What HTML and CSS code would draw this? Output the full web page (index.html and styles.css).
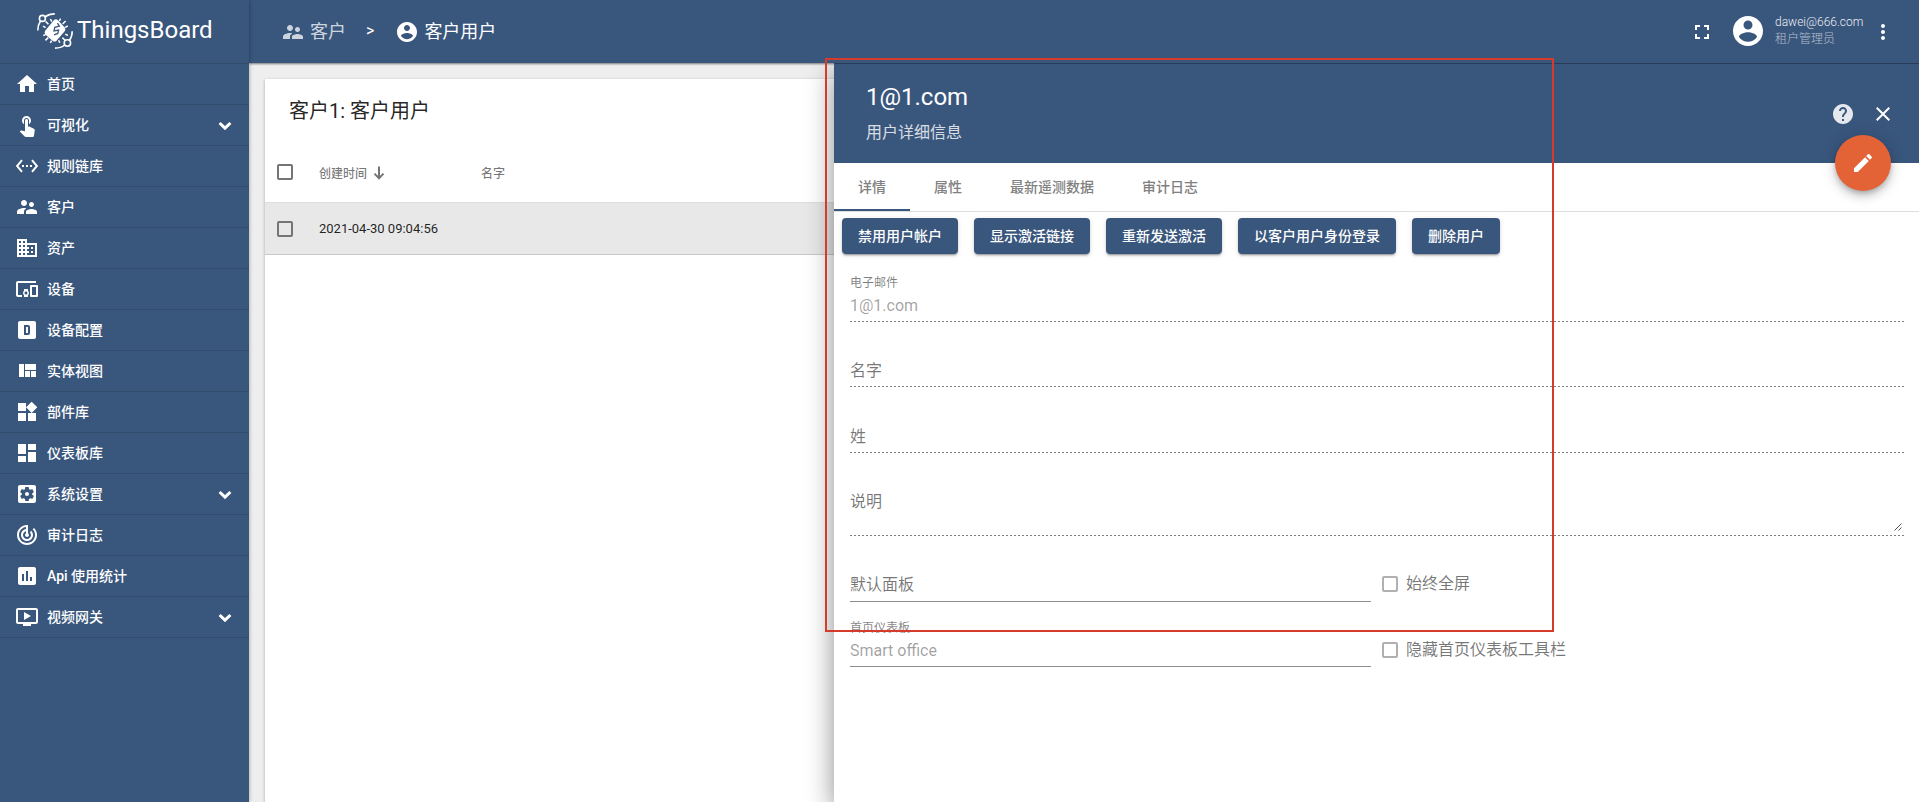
FILE: index.html
```html
<!DOCTYPE html>
<html lang="zh-CN">
<head>
  <meta charset="UTF-8">
  <title>ThingsBoard | 客户用户</title>
  <meta name="viewport" content="width=device-width, initial-scale=1.0">
  <link rel="stylesheet" href="styles.css">
</head>
<body>
  <div class="app">

    <!-- Side navigation -->
    <nav class="sidebar">
      <div class="logo">
        <svg class="logo-mark" viewBox="0 0 36 36">
          <g fill="none" stroke="#fff" stroke-width="1.6">
            <circle cx="5.4" cy="5.4" r="3"/>
            <path d="M8 4Q12 .9 17.8 .9M3.6 7.8Q.8 12 .8 17.6"/>
            <circle cx="30.4" cy="30" r="3.2"/>
            <path d="M32.4 27.4Q35.2 23.6 35.2 18.2M27.8 32Q24 35.1 18 35.1"/>
            <path stroke-width="1.5" d="M11.4 11.2L8.6 8.4M14.8 8.6L13.4 6M22.4 8L23.6 5.6M25.6 11L28.6 8M28 14.4L30.8 13M28.2 21.2L31 22.4M25.4 24.6L28 27.2M21.6 27.2L22.8 29.8M14.6 27.6L13.4 30M11.2 24.6L8.4 27.4M8.8 21.4L6.2 22.6M8.6 14.6L6 13.2"/>
          </g>
          <path fill="#fff" d="M17.2 6.8q1.9-1 3.6.3l6.9 7.4q1.2 1.8.2 3.6l-8.6 9.8q-1.6 1.2-3.4 0l-7.7-6.5q-1.2-1.8 0-3.6z"/>
          <path fill="none" stroke="#39567d" stroke-width="1.3" d="M20.4 10.2l2 3-4.6 1.2-.8 3.6 4.6-1-.8 3.4-3.8 1.4"/>
        </svg>
        <span class="logo-text">ThingsBoard</span>
      </div>
      <ul class="menu">
        <li class="menu-item">
          <svg class="icon" viewBox="0 0 24 24"><path d="M10 20v-6h4v6h5v-8h3L12 3 2 12h3v8z"/></svg>
          <span>首页</span>
        </li>
        <li class="menu-item">
          <svg class="icon" viewBox="0 0 24 24"><path d="M9 11.24V7.5C9 6.12 10.12 5 11.5 5S14 6.12 14 7.5v3.74c1.21-.81 2-2.18 2-3.74C16 5.01 13.99 3 11.5 3S7 5.01 7 7.5c0 1.56.79 2.93 2 3.74zm9.84 4.63l-4.54-2.26c-.17-.07-.35-.11-.54-.11H13v-6c0-.83-.67-1.5-1.5-1.5S10 6.67 10 7.5v10.74l-3.43-.72c-.08-.01-.15-.03-.24-.03-.31 0-.59.13-.79.33l-.79.8 4.94 4.94c.27.27.65.44 1.06.44h6.79c.75 0 1.33-.55 1.44-1.28l.75-5.27c.01-.07.02-.14.02-.2 0-.62-.38-1.16-.91-1.38z"/></svg>
          <span>可视化</span>
          <svg class="chevron" viewBox="0 0 14 10"><path d="M1.6 2L7 7.2 12.4 2"/></svg>
        </li>
        <li class="menu-item">
          <svg class="icon" viewBox="0 0 24 24"><path d="M7.77 6.76L6.23 5.48.82 12l5.41 6.52 1.54-1.28L3.42 12l4.35-5.24zM7 13h2v-2H7v2zm10-2h-2v2h2v-2zm-6 2h2v-2h-2v2zm6.77-7.52l-1.54 1.28L20.58 12l-4.35 5.24 1.54 1.28L23.18 12l-5.41-6.52z"/></svg>
          <span>规则链库</span>
        </li>
        <li class="menu-item">
          <svg class="icon" viewBox="0 0 24 24"><path d="M16.5 12c1.38 0 2.49-1.12 2.49-2.5S17.88 7 16.5 7C15.12 7 14 8.12 14 9.5s1.12 2.5 2.5 2.5zM9 11c1.66 0 2.99-1.34 2.99-3S10.66 5 9 5C7.34 5 6 6.34 6 8s1.34 3 3 3zm7.5 3c-1.83 0-5.5.92-5.5 2.75V19h11v-2.25c0-1.83-3.67-2.75-5.5-2.75zM9 13c-2.33 0-7 1.17-7 3.5V19h7v-2.25c0-.85.33-2.34 2.37-3.47C10.5 13.1 9.66 13 9 13z"/></svg>
          <span>客户</span>
        </li>
        <li class="menu-item">
          <svg class="icon" viewBox="0 0 24 24"><path d="M12 7V3H2v18h20V7H12zM6 19H4v-2h2v2zm0-4H4v-2h2v2zm0-4H4V9h2v2zm0-4H4V5h2v2zm4 12H8v-2h2v2zm0-4H8v-2h2v2zm0-4H8V9h2v2zm0-4H8V5h2v2zm10 12h-8v-2h2v-2h-2v-2h2v-2h-2V9h8v10zm-2-8h-2v2h2v-2zm0 4h-2v2h2v-2z"/></svg>
          <span>资产</span>
        </li>
        <li class="menu-item">
          <svg class="icon" viewBox="0 0 24 24"><path d="M3 6h18V4H3c-1.1 0-2 .9-2 2v12c0 1.1.9 2 2 2h4v-2H3V6zm10 6H9v1.78c-.61.55-1 1.33-1 2.22s.39 1.67 1 2.22V20h4v-1.78c.61-.55 1-1.34 1-2.22s-.39-1.67-1-2.22V12zm-2 5.5c-.83 0-1.5-.67-1.5-1.5s.67-1.5 1.5-1.5 1.5.67 1.5 1.5-.67 1.5-1.5 1.5zM22 8h-6c-.5 0-1 .5-1 1v10c0 .5.5 1 1 1h6c.5 0 1-.5 1-1V9c0-.5-.5-1-1-1zm-1 10h-4v-8h4v8z"/></svg>
          <span>设备</span>
        </li>
        <li class="menu-item">
          <svg class="icon" viewBox="0 0 24 24"><path fill-rule="evenodd" d="M9 7v10h4a2 2 0 0 0 2-2V9a2 2 0 0 0-2-2H9zm2 2h2v6h-2V9zM5 3h14a2 2 0 0 1 2 2v14a2 2 0 0 1-2 2H5a2 2 0 0 1-2-2V5a2 2 0 0 1 2-2z"/></svg>
          <span>设备配置</span>
        </li>
        <li class="menu-item">
          <svg class="icon" viewBox="0 0 24 24"><path d="M10 18h5v-6h-5v6zm-6 0h5V5H4v13zm12 0h5v-6h-5v6zM10 5v6h11V5H10z"/></svg>
          <span>实体视图</span>
        </li>
        <li class="menu-item">
          <svg class="icon" viewBox="0 0 24 24"><path d="M13 13v8h8v-8h-8zM3 21h8v-8H3v8zM3 3v8h8V3H3zm13.66-1.31L11 7.34 16.66 13l5.66-5.66-5.66-5.65z"/></svg>
          <span>部件库</span>
        </li>
        <li class="menu-item">
          <svg class="icon" viewBox="0 0 24 24"><path d="M3 13h8V3H3v10zm0 8h8v-6H3v6zm10 0h8V11h-8v10zm0-18v6h8V3h-8z"/></svg>
          <span>仪表板库</span>
        </li>
        <li class="menu-item">
          <svg class="icon" viewBox="0 0 24 24"><path d="M12 10c-1.1 0-2 .9-2 2s.9 2 2 2 2-.9 2-2-.9-2-2-2zm7-7H5c-1.11 0-2 .9-2 2v14c0 1.1.89 2 2 2h14c1.11 0 2-.9 2-2V5c0-1.1-.89-2-2-2zm-1.75 9c0 .23-.02.46-.05.68l1.48 1.16c.13.11.17.3.08.45l-1.4 2.42c-.09.15-.27.21-.43.15l-1.74-.7c-.36.28-.76.51-1.18.69l-.26 1.85c-.03.17-.18.3-.35.3h-2.8c-.17 0-.32-.13-.35-.29l-.26-1.85c-.43-.18-.82-.41-1.18-.69l-1.74.7c-.16.06-.34 0-.43-.15l-1.4-2.42c-.09-.15-.05-.34.08-.45l1.48-1.16c-.03-.23-.05-.46-.05-.69 0-.23.02-.46.05-.68l-1.48-1.16c-.13-.11-.17-.3-.08-.45l1.4-2.42c.09-.15.27-.21.43-.15l1.74.7c.36-.28.76-.51 1.18-.69l.26-1.85c.03-.17.18-.3.35-.3h2.8c.17 0 .32.13.35.29l.26 1.85c.43.18.82.41 1.18.69l1.74-.7c.16-.06.34 0 .43.15l1.4 2.42c.09.15.05.34-.08.45l-1.48 1.16c.03.23.05.46.05.69z"/></svg>
          <span>系统设置</span>
          <svg class="chevron" viewBox="0 0 14 10"><path d="M1.6 2L7 7.2 12.4 2"/></svg>
        </li>
        <li class="menu-item">
          <svg class="icon" viewBox="0 0 24 24"><path d="M19.07 4.93l-1.41 1.41C19.1 7.79 20 9.79 20 12c0 4.42-3.58 8-8 8s-8-3.58-8-8c0-4.08 3.05-7.44 7-7.93v2.02C8.16 6.57 6 9.03 6 12c0 3.31 2.69 6 6 6s6-2.69 6-6c0-1.66-.67-3.16-1.76-4.24l-1.41 1.41C15.55 9.9 16 10.9 16 12c0 2.21-1.79 4-4 4s-4-1.79-4-4c0-1.86 1.28-3.41 3-3.86v2.14c-.6.35-1 .98-1 1.72 0 1.1.9 2 2 2s2-.9 2-2c0-.74-.4-1.38-1-1.72V2h-1C6.48 2 2 6.48 2 12s4.48 10 10 10 10-4.48 10-10c0-2.76-1.12-5.26-2.93-7.07z"/></svg>
          <span>审计日志</span>
        </li>
        <li class="menu-item">
          <svg class="icon" viewBox="0 0 24 24"><path d="M19 3H5c-1.1 0-2 .9-2 2v14c0 1.1.9 2 2 2h14c1.1 0 2-.9 2-2V5c0-1.1-.9-2-2-2zM9 17H7v-7h2v7zm4 0h-2V7h2v10zm4 0h-2v-4h2v4z"/></svg>
          <span>Api 使用统计</span>
        </li>
        <li class="menu-item">
          <svg class="icon" viewBox="0 0 24 24"><path d="M21 3H3c-1.11 0-2 .89-2 2v12c0 1.1.89 2 2 2h5v2h8v-2h5c1.1 0 1.99-.9 1.99-2L23 5c0-1.11-.9-2-2-2zm0 14H3V5h18v12zm-5-6l-7 4V7z"/></svg>
          <span>视频网关</span>
          <svg class="chevron" viewBox="0 0 14 10"><path d="M1.6 2L7 7.2 12.4 2"/></svg>
        </li>
      </ul>
    </nav>

    <div class="main">
      <!-- Top toolbar -->
      <header class="toolbar">
        <div class="breadcrumb">
          <a class="crumb crumb-parent">
            <svg class="icon" viewBox="0 0 24 24"><path d="M16.5 12c1.38 0 2.49-1.12 2.49-2.5S17.88 7 16.5 7C15.12 7 14 8.12 14 9.5s1.12 2.5 2.5 2.5zM9 11c1.66 0 2.99-1.34 2.99-3S10.66 5 9 5C7.34 5 6 6.34 6 8s1.34 3 3 3zm7.5 3c-1.83 0-5.5.92-5.5 2.75V19h11v-2.25c0-1.83-3.67-2.75-5.5-2.75zM9 13c-2.33 0-7 1.17-7 3.5V19h7v-2.25c0-.85.33-2.34 2.37-3.47C10.5 13.1 9.66 13 9 13z"/></svg>
            <span>客户</span>
          </a>
          <span class="crumb-sep">&gt;</span>
          <span class="crumb">
            <svg class="icon" viewBox="0 0 24 24"><path d="M12 2C6.48 2 2 6.48 2 12s4.48 10 10 10 10-4.48 10-10S17.52 2 12 2zm0 3c1.66 0 3 1.34 3 3s-1.34 3-3 3-3-1.34-3-3 1.34-3 3-3zm0 14.2c-2.5 0-4.71-1.28-6-3.22.03-1.99 4-3.08 6-3.08 1.99 0 5.97 1.09 6 3.08-1.29 1.94-3.5 3.22-6 3.22z"/></svg>
            <span>客户用户</span>
          </span>
        </div>
        <div class="toolbar-right">
          <svg class="icon" viewBox="0 0 24 24"><path d="M7 14H5v5h5v-2H7v-3zm-2-4h2V7h3V5H5v5zm12 7h-3v2h5v-5h-2v3zM14 5v2h3v3h2V5h-5z"/></svg>
          <svg class="icon avatar" viewBox="0 0 24 24"><path d="M12 2C6.48 2 2 6.48 2 12s4.48 10 10 10 10-4.48 10-10S17.52 2 12 2zm0 3c1.66 0 3 1.34 3 3s-1.34 3-3 3-3-1.34-3-3 1.34-3 3-3zm0 14.2c-2.5 0-4.71-1.28-6-3.22.03-1.99 4-3.08 6-3.08 1.99 0 5.97 1.09 6 3.08-1.29 1.94-3.5 3.22-6 3.22z"/></svg>
          <div class="user-info">
            <div class="user-name">dawei@666.com</div>
            <div class="user-role">租户管理员</div>
          </div>
          <svg class="icon" viewBox="0 0 24 24"><path d="M12 8c1.1 0 2-.9 2-2s-.9-2-2-2-2 .9-2 2 .9 2 2 2zm0 2c-1.1 0-2 .9-2 2s.9 2 2 2 2-.9 2-2-.9-2-2-2zm0 6c-1.1 0-2 .9-2 2s.9 2 2 2 2-.9 2-2-.9-2-2-2z"/></svg>
        </div>
      </header>

      <!-- User list -->
      <div class="content">
        <div class="card">
          <h2 class="card-title">客户1: 客户用户</h2>
          <div class="row row-head">
            <span class="checkbox"></span>
            <span class="col-time">创建时间
              <svg class="sort-arrow" viewBox="0 0 12 14"><path d="M6 .5v11.5M1.5 7.6L6 12.2l4.5-4.6"/></svg>
            </span>
            <span>名字</span>
          </div>
          <div class="row row-selected">
            <span class="checkbox"></span>
            <span class="col-time">2021-04-30 09:04:56</span>
          </div>
        </div>
      </div>
    </div>

    <!-- User details drawer -->
    <section class="details">
      <div class="details-header">
        <div class="details-titles">
          <div class="details-title">1@1.com</div>
          <div class="details-subtitle">用户详细信息</div>
        </div>
        <div class="details-actions">
          <svg class="icon help" viewBox="0 0 24 24"><path d="M12 2C6.48 2 2 6.48 2 12s4.48 10 10 10 10-4.48 10-10S17.52 2 12 2zm1 17h-2v-2h2v2zm2.07-7.75l-.9.92C13.45 12.9 13 13.5 13 15h-2v-.5c0-1.1.45-2.1 1.17-2.83l1.24-1.26c.37-.36.59-.86.59-1.41 0-1.1-.9-2-2-2s-2 .9-2 2H8c0-2.21 1.79-4 4-4s4 1.79 4 4c0 .88-.36 1.68-.93 2.25z"/></svg>
          <svg class="icon" viewBox="0 0 24 24"><path d="M19 6.41L17.59 5 12 10.59 6.41 5 5 6.41 10.59 12 5 17.59 6.41 19 12 13.41 17.59 19 19 17.59 13.41 12z"/></svg>
        </div>
        <button class="fab">
          <svg class="icon" viewBox="0 0 24 24"><path d="M3 17.25V21h3.75L17.81 9.94l-3.75-3.75L3 17.25zM20.71 7.04c.39-.39.39-1.02 0-1.41l-2.34-2.34c-.39-.39-1.02-.39-1.41 0l-1.83 1.83 3.75 3.75 1.83-1.83z"/></svg>
        </button>
      </div>

      <div class="tabs">
        <div class="tab active">详情</div>
        <div class="tab">属性</div>
        <div class="tab">最新遥测数据</div>
        <div class="tab">审计日志</div>
      </div>

      <div class="buttons">
        <button class="btn">禁用用户帐户</button>
        <button class="btn">显示激活链接</button>
        <button class="btn">重新发送激活</button>
        <button class="btn">以客户用户身份登录</button>
        <button class="btn">删除用户</button>
      </div>

      <div class="form">
        <div class="field field-email">
          <div class="field-label">电子邮件</div>
          <div class="field-value">1@1.com</div>
        </div>
        <div class="field field-name">
          <div class="field-placeholder">名字</div>
        </div>
        <div class="field field-surname">
          <div class="field-placeholder">姓</div>
        </div>
        <div class="field field-desc">
          <div class="field-placeholder">说明</div>
          <svg class="resizer" viewBox="0 0 8 8"><path d="M.5 7.5l7-7M4.5 7.5l3-3"/></svg>
        </div>

        <div class="form-row form-row-default">
          <div class="field field-solid">
            <div class="field-placeholder">默认面板</div>
          </div>
          <label class="check"><span class="checkbox"></span>始终全屏</label>
        </div>
        <div class="form-row form-row-home">
          <div class="field field-solid">
            <div class="field-label">首页仪表板</div>
            <div class="field-value">Smart office</div>
          </div>
          <label class="check"><span class="checkbox"></span>隐藏首页仪表板工具栏</label>
        </div>
      </div>
    </section>

    <!-- Highlight frame -->
    <div class="highlight"></div>
  </div>
</body>
</html>
```

FILE: styles.css
```css
* {
  box-sizing: border-box;
}

body, h2, ul {
  margin: 0;
  padding: 0;
}

body {
  font-family: Roboto, "Noto Sans CJK SC", sans-serif;
  font-size: 14px;
  color: rgba(0, 0, 0, 0.87);
  background-color: #eee;
}

.app {
  position: relative;
  display: flex;
  height: 802px;
  overflow: hidden;
}

.icon {
  width: 24px;
  height: 24px;
  flex: none;
  fill: currentColor;
}

/* Side navigation */
.sidebar {
  width: 249px;
  flex: none;
  background-color: #39567d;
  color: #fff;
  z-index: 2;
  box-shadow: 0 0 4px rgba(0, 0, 0, 0.35);
}

.logo {
  display: flex;
  height: 64px;
  padding: 13px 0 0 37px;
  border-bottom: 1px solid #324c6e;
}

.logo-mark {
  width: 36px;
  height: 36px;
}

.logo-text {
  margin-left: 4px;
  font-size: 24px;
  line-height: 35px;
}

.menu {
  list-style: none;
}

.menu-item {
  display: flex;
  align-items: center;
  height: 41px;
  padding: 0 17px 0 15px;
  border-bottom: 1px solid #324c6e;
  font-weight: 500;
}

.menu-item span {
  flex: 1;
  margin: -2px 0 0 8px;
}

.chevron {
  width: 14px;
  height: 10px;
  margin-top: 2px;
}

.chevron path {
  fill: none;
  stroke: #fff;
  stroke-width: 3;
}

/* Top toolbar */
.main {
  flex: 1;
  display: flex;
  flex-direction: column;
}

.toolbar {
  display: flex;
  justify-content: space-between;
  align-items: center;
  height: 63px;
  flex: none;
  padding: 0 24px 0 32px;
  background-color: #39567d;
  color: #fff;
  box-shadow: 0 1px 2px rgba(0, 0, 0, 0.5);
}

.breadcrumb,
.crumb,
.toolbar-right {
  display: flex;
  align-items: center;
}

.crumb {
  font-size: 18px;
  line-height: 24px;
}

.crumb span {
  margin-left: 5px;
}

.crumb-parent {
  opacity: 0.75;
}

.crumb-sep {
  margin: 0 21px 2px 20px;
  font-size: 16px;
}

.avatar {
  width: 36px;
  height: 36px;
  margin: -1px 9px 0 16px;
}

.user-info {
  width: 96px;
  margin-top: -3px;
  font-weight: 300;
}

.user-name {
  font-size: 12px;
  line-height: 18px;
  opacity: 0.9;
}

.user-role {
  font-size: 12px;
  line-height: 17px;
  opacity: 0.6;
}

/* User list */
.content {
  flex: 1;
  padding: 16px 0 0 16px;
}

.card {
  height: 100%;
  background-color: #fff;
  box-shadow: 0 1px 3px rgba(0, 0, 0, 0.3);
}

.card-title {
  height: 67px;
  padding-left: 24px;
  font-size: 20px;
  font-weight: 400;
  line-height: 64px;
}

.row {
  display: flex;
  align-items: center;
  padding-left: 12px;
  font-size: 13px;
}

.row-head {
  height: 57px;
  padding-bottom: 4px;
  border-bottom: 1px solid #dedede;
  font-size: 12px;
  font-weight: 500;
  color: rgba(0, 0, 0, 0.54);
}

.row-selected {
  height: 52px;
  background-color: #e8e8e8;
  border-bottom: 1px solid #c8c8c8;
}

.checkbox {
  width: 16px;
  height: 16px;
  flex: none;
  border: 2px solid #757575;
  border-radius: 2px;
}

.col-time {
  display: flex;
  align-items: center;
  width: 162px;
  margin-left: 26px;
}

.sort-arrow {
  width: 12px;
  height: 14px;
  margin: 2px 0 0 6px;
}

.sort-arrow path {
  fill: none;
  stroke: #757575;
  stroke-width: 2;
}

/* Details drawer slides over the list */
.details {
  position: absolute;
  top: 63px;
  right: 0;
  bottom: 0;
  width: 1085px;
  background-color: #fff;
  box-shadow: 0 8px 26px rgba(0, 0, 0, 0.45);
  clip-path: inset(0 0 0 -40px);
  z-index: 1;
}

.details-header {
  position: relative;
  display: flex;
  justify-content: space-between;
  height: 100px;
  padding: 16px 24px 0 32px;
  background-color: #39567d;
  color: #fff;
  border-top: 1px solid #283c5a;
}

.details-title {
  font-size: 24px;
  line-height: 34px;
}

.details-subtitle {
  margin-top: 7px;
  font-size: 16px;
  line-height: 24px;
  opacity: 0.8;
}

.details-actions {
  display: flex;
  gap: 16px;
  margin-top: 22px;
}

.help {
  opacity: 0.87;
}

.fab {
  position: absolute;
  right: 28px;
  bottom: -28px;
  display: flex;
  justify-content: center;
  align-items: center;
  width: 56px;
  height: 56px;
  padding: 0;
  border: none;
  border-radius: 50%;
  background-color: #e36337;
  color: #fff;
  box-shadow: 0 3px 5px -1px rgba(0, 0, 0, 0.2), 0 6px 10px rgba(0, 0, 0, 0.14), 0 1px 18px rgba(0, 0, 0, 0.12);
}

.tabs {
  display: flex;
  height: 49px;
  border-bottom: 1px solid #dedede;
}

.tab {
  height: 48px;
  padding: 0 24px;
  line-height: 48px;
  font-weight: 500;
  color: #808080;
}

.tab.active {
  border-bottom: 2px solid #39567d;
}

.buttons {
  display: flex;
  gap: 16px;
  padding: 6px 8px 0;
}

.btn {
  height: 36px;
  padding: 0 16px;
  border: none;
  border-radius: 4px;
  background-color: #39567d;
  color: #fff;
  font-family: inherit;
  font-size: 14px;
  font-weight: 500;
  line-height: 36px;
  box-shadow: 0 3px 1px -2px rgba(0, 0, 0, 0.2), 0 2px 2px rgba(0, 0, 0, 0.14), 0 1px 5px rgba(0, 0, 0, 0.12);
}

/* Form fields, disabled ones have a dotted underline */
.form {
  padding: 0 15px 0 16px;
}

.field {
  display: flex;
  flex-direction: column;
  justify-content: flex-end;
  position: relative;
  padding-bottom: 4px;
  background: linear-gradient(to right, rgba(0, 0, 0, 0.5) 40%, transparent 0) left bottom / 4px 1px repeat-x;
}

.field-email {
  height: 68px;
}

.field-name {
  height: 65px;
}

.field-surname {
  height: 66px;
}

.field-desc {
  height: 83px;
  padding-bottom: 22px;
}

.field-label {
  font-size: 12px;
  line-height: 18px;
  color: rgba(0, 0, 0, 0.5);
}

.field-value {
  font-size: 16px;
  line-height: 24px;
  margin-top: 2px;
  color: rgba(0, 0, 0, 0.38);
}

.field-placeholder {
  font-size: 16px;
  line-height: 24px;
  color: rgba(0, 0, 0, 0.54);
}

.resizer {
  position: absolute;
  right: 2px;
  bottom: 5px;
  width: 8px;
  height: 8px;
}

.resizer path {
  fill: none;
  stroke: #555;
}

.form-row {
  display: flex;
}

.form-row-default {
  height: 66px;
}

.form-row-home {
  height: 65px;
}

.field-solid {
  width: 521px;
  background: none;
  border-bottom: 1px solid #8e8e8e;
}

.form-row-home .field-solid {
  padding-bottom: 3px;
}

.check {
  display: flex;
  align-items: center;
  align-self: flex-end;
  gap: 8px;
  margin: 0 0 6px 11px;
  font-size: 16px;
  line-height: 24px;
  color: rgba(0, 0, 0, 0.54);
}

.form-row-home .check {
  margin-bottom: 5px;
}

.check .checkbox {
  border-color: #b0b0b0;
}

/* Red frame drawn on top of everything */
.highlight {
  position: absolute;
  top: 58px;
  left: 825px;
  width: 729px;
  height: 574px;
  border: 2px solid #d63a2b;
  z-index: 3;
}
```
